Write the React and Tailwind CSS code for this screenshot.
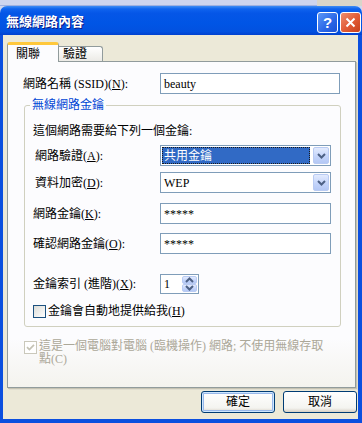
import React from "react";

const arrowBtn =
	"rounded-[2px] border border-[#b9cbf3] bg-[linear-gradient(to_bottom,#e3ebfe,#c2d3fa_60%,#b4c8f5)] flex items-center justify-center";

function Key({ children }) {
	return <span className="underline underline-offset-[1px]">{children}</span>;
}

function TextBox({ value, width = "w-[171px]" }) {
	return (
		<div
			className={`${width} h-[21px] border border-[#7f9db9] bg-white pl-[3px] flex items-center text-[12px] text-black`}>
			{value}
		</div>
	);
}

function Chevron({ up }) {
	return (
		<svg width="9" height="6" viewBox="0 0 9 6">
			<path
				d={up ? "M1 5l3.5-3.5L8 5" : "M1 1l3.5 3.5L8 1"}
				fill="none"
				stroke="#4d6185"
				strokeWidth="2"
			/>
		</svg>
	);
}

function Combo({ value, selected }) {
	return (
		<div className="w-[171px] h-[21px] border border-[#7f9db9] bg-white p-px flex gap-[3px]">
			<div
				className={`flex-1 flex items-center pl-[2px] text-[12px] ${
					selected
						? "bg-[#316ac5] text-white outline outline-1 outline-dotted outline-[#1a1a1a] -outline-offset-1"
						: "text-black"
				}`}>
				{value}
			</div>
			<div className={`w-[16px] ${arrowBtn}`}>
				<Chevron />
			</div>
		</div>
	);
}

function Spin({ value }) {
	return (
		<div className="w-[39px] h-[20px] border border-[#7f9db9] bg-white p-px flex">
			<div className="flex-1 flex items-center pl-[2px] text-[12px]">{value}</div>
			<div className="w-[15px] flex flex-col">
				<div className={`flex-1 ${arrowBtn}`}>
					<Chevron up />
				</div>
				<div className={`flex-1 ${arrowBtn}`}>
					<Chevron />
				</div>
			</div>
		</div>
	);
}

function CheckBox({ checked, disabled }) {
	return (
		<div
			className={`w-[13px] h-[13px] shrink-0 border flex items-center justify-center ${
				disabled
					? "border-[#cac8bb] bg-white"
					: "border-[#1c5180] bg-[linear-gradient(135deg,#dcdcd7,#ffffff)]"
			}`}>
			{checked && (
				<svg width="9" height="9" viewBox="0 0 9 9">
					<path
						d="M1 4.2l2.4 2.4L8 1.8"
						fill="none"
						stroke={disabled ? "#c4c2b4" : "#21a121"}
						strokeWidth="1.7"
					/>
				</svg>
			)}
		</div>
	);
}

function XpButton({ label, isDefault }) {
	return (
		<button
			className={`w-[74px] h-[22px] rounded-[3px] border border-[#003c74] bg-[linear-gradient(to_bottom,#ffffff,#f4f4f0_80%,#d6d0c5)] text-[12px] text-black flex items-center justify-center ${
				isDefault ? "shadow-[inset_0_0_0_1px_#cee7ff,inset_0_0_0_2px_#98b8ea]" : ""
			}`}>
			{label}
		</button>
	);
}

export default function App() {
	return (
		<div className="w-[362px] h-[423px] flex flex-col overflow-hidden bg-[#cfd6ee] font-['Liberation_Serif','Noto_Sans_CJK_TC',serif] text-[12px] leading-[14px] text-black">
			{/* strip of the window behind */}
			<div className="h-[6px] flex shrink-0">
				<div className="w-[317px] bg-[#cdd4ee] border-b border-[#9fb0e0]" />
				<div className="flex-1 bg-[#d9d5c9]" />
			</div>

			<div className="flex-1 flex flex-col rounded-t-[7px] overflow-hidden">
				{/* title bar */}
				<div className="h-[29px] shrink-0 flex items-start justify-between bg-[linear-gradient(to_bottom,#3f8cf3_0%,#0f63ee_10%,#0556e7_25%,#0055e5_60%,#0251e0_88%,#0141cf_100%)]">
					<div className="pl-[6px] pt-[7px] text-white text-[13px] font-bold leading-[15px] font-['Noto_Sans_CJK_TC',sans-serif] [text-shadow:1px_1px_#0a1883]">
						無線網路內容
					</div>
					<div className="flex gap-[2px] pt-[6px] pr-[1px]">
						<div className="w-[21px] h-[21px] rounded-[3px] border border-white bg-[linear-gradient(135deg,#5b97f8,#2a66e6_60%,#1c52d6)] flex items-center justify-center text-white font-bold text-[15px] font-['Liberation_Sans',sans-serif]">
							?
						</div>
						<div className="w-[21px] h-[21px] rounded-[3px] border border-white bg-[linear-gradient(135deg,#ef8e6e,#e05a34_55%,#c8401c)] flex items-center justify-center">
							<svg width="11" height="11" viewBox="0 0 11 11">
								<path d="M1.5 1.5l8 8M9.5 1.5l-8 8" stroke="#fff" strokeWidth="2" />
							</svg>
						</div>
					</div>
				</div>

				{/* body */}
				<div className="flex-1 flex flex-col bg-[#ece9d8] border-l-[3px] border-r-[4px] border-b-[4px] border-[#0b4fdf]">
					<div className="pt-[7px] pl-[4px] pr-[2px] flex flex-col">
						{/* tabs */}
						<div className="h-[20px] flex items-end -mb-px relative z-10">
							<div className="w-[52px] h-[20px] rounded-t-[3px] border border-b-0 border-[#919b9c] border-t-[3px] border-t-[#ffc83c] bg-[#fcfcfe] pl-[8px] pt-[2px] leading-[14px]">
								關聯
							</div>
							<div className="w-[44px] h-[15px] mb-px rounded-tr-[3px] border border-l-0 border-b-0 border-[#919b9c] bg-[linear-gradient(to_bottom,#ffffff,#ecebe6)] pl-[4px] leading-[14px]">
								驗證
							</div>
						</div>

						{/* panel */}
						<div className="w-[349px] h-[327px] border border-[#919b9c] bg-[linear-gradient(to_bottom,#fcfcfe_85%,#f4f3ee)] shadow-[1px_1px_0_#c5c2b2,2px_2px_0_#e0ddcf] flex flex-col">
							<div className="mt-[11px] pl-[15px] flex items-center">
								<div className="w-[137px]">
									網路名稱 (SSID)(<Key>N</Key>):
								</div>
								<TextBox value="beauty" width="w-[180px]" />
							</div>

							<fieldset className="mt-[4px] ml-[16px] w-[317px] border border-[#d0d0bf] rounded-[3px] pb-[8px]">
								<legend className="ml-[5px] px-[2px] text-[#0046d5] leading-[14px]">
									無線網路金鑰
								</legend>
								<div className="mt-[12px] pl-[8px]">這個網路需要給下列一個金鑰:</div>

								<div className="mt-[7px] pl-[10px] flex items-center">
									<div className="w-[125px]">
										網路驗證(<Key>A</Key>):
									</div>
									<Combo value="共用金鑰" selected />
								</div>
								<div className="mt-[6px] pl-[10px] flex items-center">
									<div className="w-[125px]">
										資料加密(<Key>D</Key>):
									</div>
									<Combo value="WEP" />
								</div>
								<div className="mt-[10px] pl-[8px] flex items-center">
									<div className="w-[127px]">
										網路金鑰(<Key>K</Key>):
									</div>
									<TextBox value="*****" />
								</div>
								<div className="mt-[9px] pl-[8px] flex items-center">
									<div className="w-[127px]">
										確認網路金鑰(<Key>O</Key>):
									</div>
									<TextBox value="*****" />
								</div>
								<div className="mt-[20px] pl-[8px] flex items-center">
									<div className="w-[127px]">
										金鑰索引 (進階)(<Key>X</Key>):
									</div>
									<Spin value="1" />
								</div>
								<div className="mt-[10px] pl-[8px] flex items-center gap-[2px]">
									<CheckBox />
									<div>
										金鑰會自動地提供給我(<Key>H</Key>)
									</div>
								</div>
							</fieldset>

							<div className="mt-[13px] pl-[16px] flex items-start gap-[2px] text-[#aca899]">
								<div className="pt-px">
									<CheckBox checked disabled />
								</div>
								<div className="leading-[13px] whitespace-nowrap">
									<div>這是一個電腦對電腦 (臨機操作) 網路; 不使用無線存取</div>
									<div>點(C)</div>
								</div>
							</div>
						</div>
					</div>

					<div className="mt-[3px] pr-[1px] flex justify-end gap-[8px]">
						<XpButton label="確定" isDefault />
						<XpButton label="取消" />
					</div>
				</div>
			</div>
		</div>
	);
}
